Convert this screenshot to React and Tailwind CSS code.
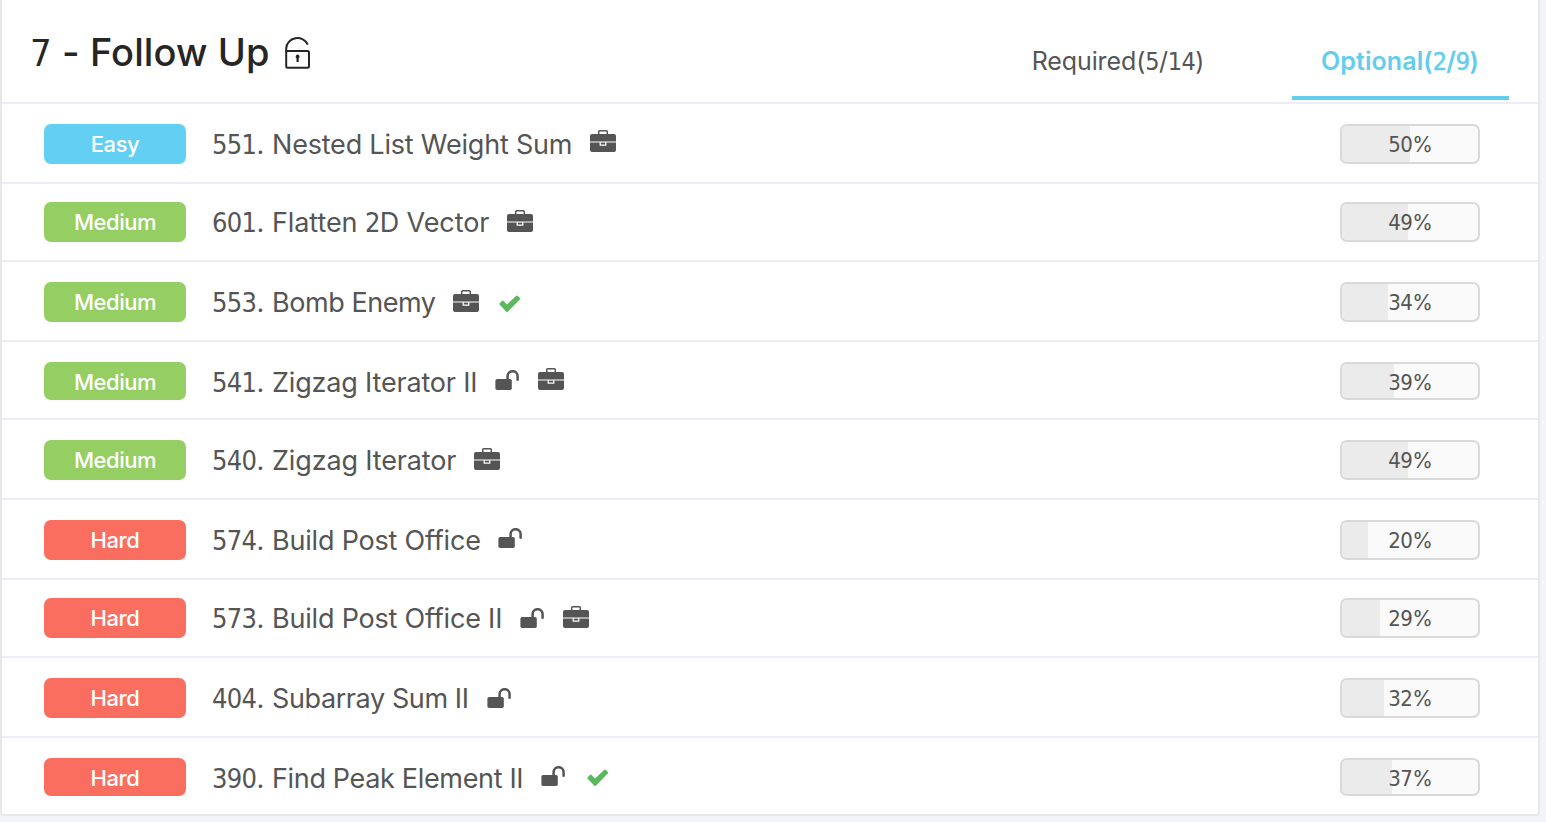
import React from "react";

const LEVELS = {
  Easy: "bg-[#63d0f3]",
  Medium: "bg-[#95cf64]",
  Hard: "bg-[#fa6e60]",
};

const PROBLEMS = [
  { level: "Easy", id: "551", title: "Nested List Weight Sum", rate: 50, icons: ["case"], row: "h-20 pt-5", badge: "h-10", width: "w-[360px]", track: "tracking-[-0.2px]", lift: "pt-1.5" },
  { level: "Medium", id: "601", title: "Flatten 2D Vector", rate: 49, icons: ["case"], row: "h-[78px] pt-[18px]", badge: "h-10", width: "w-[277px]", track: "tracking-[-0.1px]", lift: "pt-2" },
  { level: "Medium", id: "553", title: "Bomb Enemy", rate: 34, icons: ["case", "check"], row: "h-20 pt-5", badge: "h-10", width: "w-[223px]", track: "tracking-[-0.45px]", lift: "pt-2" },
  { level: "Medium", id: "541", title: "Zigzag Iterator II", rate: 39, icons: ["lock", "case"], row: "h-[78px] pt-5", badge: "h-[38px]", width: "w-[265px]", track: "tracking-[-0.18px]", lift: "pt-1.5" },
  { level: "Medium", id: "540", title: "Zigzag Iterator", rate: 49, icons: ["case"], row: "h-20 pt-5", badge: "h-10", width: "w-[244px]", track: "tracking-[-0.15px]", lift: "pt-2" },
  { level: "Hard", id: "574", title: "Build Post Office", rate: 20, icons: ["lock"], row: "h-20 pt-5", badge: "h-10", width: "w-[268px]", track: "tracking-[-0.2px]", lift: "pt-1.5" },
  { level: "Hard", id: "573", title: "Build Post Office II", rate: 29, icons: ["lock", "case"], row: "h-[78px] pt-[18px]", badge: "h-10", width: "w-[290px]", track: "tracking-[-0.2px]", lift: "pt-2" },
  { level: "Hard", id: "404", title: "Subarray Sum II", rate: 32, icons: ["lock"], row: "h-20 pt-5", badge: "h-10", width: "w-[257px]", track: "tracking-[-0.4px]", lift: "pt-2" },
  { level: "Hard", id: "390", title: "Find Peak Element II", rate: 37, icons: ["lock", "check"], row: "h-[78px] pt-5", badge: "h-[38px]", width: "w-[311px]", track: "tracking-[-0.34px]", lift: "pt-1.5" },
];

function Digits({ children }) {
  return <span className="font-['DejaVu_Sans_Condensed','DejaVu_Sans',sans-serif] [font-stretch:condensed] tracking-[-0.024em] [font-synthesis:none]">{children}</span>;
}

/* Sets runs of digits in the figure face and leaves the rest in Inter. */
function Mixed({ text }) {
  return text.split(/(\d+)/).map((part, i) => (/^\d+$/.test(part) ? <Digits key={i}>{part}</Digits> : <React.Fragment key={i}>{part}</React.Fragment>));
}

function Briefcase() {
  return (
    <svg className="shrink-0" width="26" height="22" viewBox="0 0 26 22">
      <path d="M8.7 5V1.8Q8.7.8 9.7.8H16.3Q17.3.8 17.3 1.8V5" fill="none" stroke="#555" strokeWidth="1.5" />
      <path d="M2 3.9H24Q26 3.9 26 5.9V11.5H0V5.9Q0 3.9 2 3.9Z" fill="#555" />
      <path d="M0 12.6H9.6V15.8H16.4V12.6H26V20Q26 22 24 22H2Q0 22 0 20Z" fill="#555" />
      <path d="M10.8 12.6H15.2V14.5H10.8Z" fill="#555" />
    </svg>
  );
}

function Unlock() {
  return (
    <svg className="mt-0.5 shrink-0" width="24" height="20" viewBox="0 0 24 20">
      <rect x="0.4" y="9" width="16.4" height="11" rx="1.7" fill="#555" />
      <path d="M12.6 10V6.2a5 5 0 0 1 10 0v3.6" fill="none" stroke="#555" strokeWidth="2.5" strokeLinecap="round" />
    </svg>
  );
}

function Check() {
  return (
    <svg className="ml-px mt-[5px] shrink-0" width="22" height="18" viewBox="0 0 22 18">
      <path d="M0.7 8.2L3.1 5.8Q3.7 5.2 4.3 5.8L8 9.5L17.3.7Q17.9.1 18.5.7L21 3.1Q21.6 3.7 21 4.3L8.8 16.8Q8.1 17.5 7.4 16.8L.7 9.7Q0 8.9.7 8.2Z" fill="#5cb85c" />
    </svg>
  );
}

const ICONS = { case: Briefcase, lock: Unlock, check: Check };

function Row({ item, last }) {
  return (
    <li className={`flex items-start pl-[42px] pr-[58px] ${item.row} ${last ? "" : "border-b-2 border-[#ebeff5]"}`}>
      <span className={`flex w-[142px] shrink-0 justify-center rounded-[7px] text-[22px] font-[450] leading-10 tracking-[-0.45px] text-white ${LEVELS[item.level]} ${item.badge}`}>
        {item.level}
      </span>
      <a className={`ml-[26px] whitespace-nowrap text-[27px] leading-[42px] tracking-[0.1px] text-[#555] ${item.width}`}>
        <Mixed text={`${item.id}. `} />
        <span className={item.track}>
          <Mixed text={item.title} />
        </span>
      </a>
      <span className={`ml-[18px] flex items-start ${item.icons.includes("check") && item.icons.includes("lock") ? "gap-[21px]" : "gap-[19px]"} ${item.lift}`}>
        {item.icons.map((name) => {
          const Icon = ICONS[name];
          return <Icon key={name} />;
        })}
      </span>
      <span className={`ml-auto grid w-[140px] overflow-hidden rounded-[7px] border-2 border-[#d9d9d9] bg-[#fafafa] ${item.badge}`}>
        <span className="col-start-1 row-start-1 h-9 bg-[#ebebeb]" style={{ width: `${Math.floor(item.rate * 0.68) * 2}px` }} />
        <span className="z-10 col-start-1 row-start-1 text-center text-[22px] leading-9 tracking-[-1px] text-[#555]">
          <Mixed text={`${item.rate}`} />
          <span className="text-[21px]">%</span>
        </span>
      </span>
    </li>
  );
}

export default function App() {
  return (
    <div className="h-[822px] w-[1546px] overflow-hidden bg-[#f3f4f9] font-['Inter','Liberation_Sans',sans-serif]">
      <section className="h-[816px] w-[1540px] rounded-b-[4px] border-2 border-t-0 border-[#e8e8e8] bg-white">
        <header className="flex h-[104px] items-start border-b-2 border-[#ebeff5] pl-7 pr-[29px]">
          <h2 className="w-[240px] whitespace-nowrap pt-[26px] text-[38px] font-medium leading-[53px] tracking-[0.1px] text-[#262626]">
            <span className="font-normal tracking-[1px]"><Mixed text="7" /></span>
            <span className="ml-px"><Mixed text=" - Follow Up" /></span>
          </h2>
          <svg className="ml-[15px] mt-9" width="26" height="34" viewBox="0 0 26 34">
            <g fill="none" stroke="#262626" strokeWidth="2">
              <rect x="1.2" y="15" width="22.8" height="16.8" rx="1.5" />
              <path d="M1.2 16V12.5A11.2 10.5 0 0 1 22.8 8.7" />
            </g>
            <path d="M12.6 18.4a2.1 2.1 0 0 1 1.1 3.8V26h-2.2V22.2a2.1 2.1 0 0 1 1.1-3.8Z" fill="#262626" />
          </svg>
          <nav className="ml-auto flex text-[25px] leading-[50px]">
            <a className="mr-[59px] flex h-[100px] w-[230px] justify-center whitespace-nowrap pt-9 text-[#555]">
              <span className="tracking-[-0.1px]"><Mixed text="Required(5/14)" /></span>
            </a>
            <a className="flex h-[100px] w-[217px] justify-center whitespace-nowrap border-b-4 border-[#63cdeb] pr-px pt-9 font-semibold text-[#63cdeb]">
              <span className="tracking-[0.1px]">Optional(<span className="font-medium [-webkit-text-stroke:0.5px_#63cdeb]"><Mixed text="2/9" /></span>)</span>
            </a>
          </nav>
        </header>
        <ul>
          {PROBLEMS.map((item, i) => (
            <Row key={item.id} item={item} last={i === PROBLEMS.length - 1} />
          ))}
        </ul>
      </section>
    </div>
  );
}
